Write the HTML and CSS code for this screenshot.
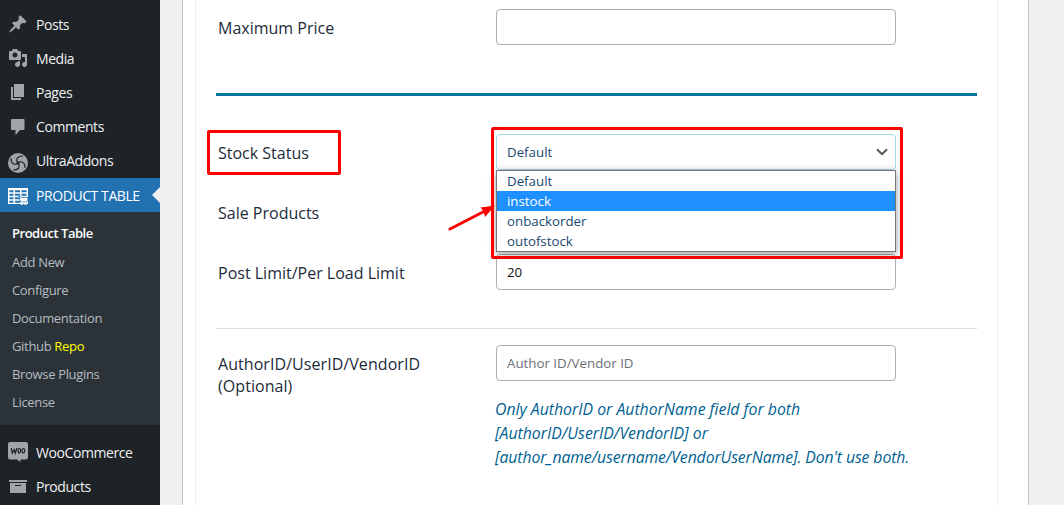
FILE: index.html
```html
<!DOCTYPE html>
<html lang="en">
<head>
  <meta charset="UTF-8">
  <meta name="viewport" content="width=device-width, initial-scale=1.0">
  <title>Product Table</title>
  <link rel="stylesheet" href="styles.css">
</head>
<body>
  <nav class="sidebar">
    <a class="menu-item" href="#">
      <svg class="icon" viewBox="0 0 20 20"><path d="M10.44 3.02l1.82-1.82 6.36 6.35-1.83 1.82c-1.05-.68-2.48-.57-3.41.36l-.75.75c-.92.93-1.04 2.35-.35 3.41l-1.83 1.82-2.41-2.41-2.8 2.79c-.42.42-3.38 2.71-3.8 2.29s1.86-3.39 2.28-3.81l2.79-2.79L4.1 9.36l1.83-1.82c1.05.69 2.48.57 3.4-.36l.75-.75c.93-.92 1.05-2.35.36-3.41z"/></svg>
      <span>Posts</span>
    </a>
    <a class="menu-item" href="#">
      <svg class="icon" viewBox="0 0 20 20"><path fill-rule="evenodd" d="M13 11V4c0-.55-.45-1-1-1h-1.670L9 1H5L3.670 3H2c-.55 0-1 .45-1 1v7c0 .55.45 1 1 1h10c.55 0 1-.45 1-1zM7 4.500c1.380 0 2.500 1.120 2.500 2.500S8.380 9.500 7 9.500 4.500 8.380 4.500 7 5.620 4.500 7 4.500zM14 6h5v10.500c0 1.380-1.120 2.500-2.500 2.500S14 17.880 14 16.500s1.120-2.500 2.500-2.500c.170 0 .340.020.500.050V9h-3V6zm-4 8.050V13h2v3.500c0 1.380-1.120 2.500-2.500 2.500S7 17.880 7 16.500 8.120 14 9.500 14c.170 0 .340.020.500.050z"/></svg>
      <span>Media</span>
    </a>
    <a class="menu-item" href="#">
      <svg class="icon" viewBox="0 0 20 20"><path d="M6 15V2h10v13H6zm-1 1h8v2H3V5h2v11z"/></svg>
      <span>Pages</span>
    </a>
    <a class="menu-item" href="#">
      <svg class="icon" viewBox="0 0 20 20"><path d="M4 2h11.500c.6 0 1 .4 1 1v9c0 .6-.4 1-1 1H12l-4.500 5v-5H4c-.6 0-1-.4-1-1V3c0-.6.4-1 1-1z"/></svg>
      <span>Comments</span>
    </a>
    <a class="menu-item" href="#">
      <svg class="icon icon-ultra" viewBox="0 0 20 20">
        <circle cx="10" cy="10" r="10"/>
        <g fill="none" stroke="#1d2327" stroke-width="1.100" stroke-linecap="round">
          <path d="M10 10C7.500 7 8.800 3 14.500 3"/>
          <path d="M10 10C13 7.500 17 8.800 17 14.500"/>
          <path d="M10 10C12.500 13 11.200 17 5.500 17"/>
          <path d="M10 10C7 12.500 3 11.200 3 5.500"/>
        </g>
        <path fill="#1d2327" d="M8.600 8l1.700.7 1.700-.2-.6 1.700.2 1.700-1.800-.7-1.700.3.600-1.700z"/>
      </svg>
      <span>UltraAddons</span>
    </a>
    <a class="menu-item current" href="#">
      <svg class="icon icon-table" viewBox="0 0 20 20">
        <path fill-rule="evenodd" d="M0 2h20v16H0zM1.500 4.300v2h4v-2zM7 4.300v2h5v-2zM13.500 4.300v2h5v-2zM1.500 7.800v2h4v-2zM7 7.800v2h5v-2zM13.500 7.800v2h5v-2zM1.500 11.300v2h4v-2zM7 11.300v2h5v-2zM1.500 14.800v2h4v-2zM7 14.800v2h5v-2z"/>
        <path stroke="#2271b1" stroke-width=".7" d="M10.500 10.300h2l.5 1.200h7l-1 4.500h-6.500l-1-4.500h-1z"/>
        <circle cx="13.800" cy="17.800" r="1.300"/>
        <circle cx="17.600" cy="17.800" r="1.300"/>
      </svg>
      <span>PRODUCT TABLE</span>
    </a>
    <ul class="submenu">
      <li class="active"><a href="#">Product Table</a></li>
      <li><a href="#">Add New</a></li>
      <li><a href="#">Configure</a></li>
      <li><a href="#">Documentation</a></li>
      <li><a href="#">Github <span class="repo">Repo</span></a></li>
      <li><a href="#">Browse Plugins</a></li>
      <li><a href="#">License</a></li>
    </ul>
    <a class="menu-item after-sub" href="#">
      <svg class="icon icon-woo" viewBox="0 0 20 20">
        <path d="M2 0h16a2 2 0 0 1 2 2v13.500a2 2 0 0 1-2 2h-5.500V20L9 17.500H2a2 2 0 0 1-2-2V2a2 2 0 0 1 2-2z"/>
        <g fill="none" stroke="#1d2327" stroke-width="1.200">
          <path d="M3.300 6l1 5.200 1.800-3.600 1.200 3.600L8.800 6"/>
          <ellipse cx="11.300" cy="8.700" rx="1.300" ry="2.200"/>
          <ellipse cx="15.400" cy="8.700" rx="1.300" ry="2.200"/>
        </g>
      </svg>
      <span>WooCommerce</span>
    </a>
    <a class="menu-item" href="#">
      <svg class="icon" viewBox="0 0 20 20"><path fill-rule="evenodd" d="M19 4v2H1V4h18zM2 7h16v10H2V7zm11 3V9H7v1h6z"/></svg>
      <span>Products</span>
    </a>
  </nav>

  <main class="content">
    <div class="panel">
      <form class="panel-inner">
        <section class="group group-price">
          <div class="field">
            <label>Maximum Price</label>
            <div class="input"></div>
          </div>
        </section>

        <section class="group group-stock">
          <div class="field">
            <label class="marked">Stock Status</label>
            <div class="input select focused">
              <span>Default</span>
              <svg class="chevron" viewBox="0 0 12 8"><path d="M1 1.200l5 5 5-5"/></svg>
              <ul class="dropdown">
                <li>Default</li>
                <li class="selected">instock</li>
                <li>onbackorder</li>
                <li>outofstock</li>
              </ul>
              <svg class="arrow" viewBox="0 0 48 28">
                <path class="arrow-line" d="M2 25L36 7.500"/>
                <path class="arrow-head" d="M47 1.500L32.500 3.500l3 3.500 1.500 6z"/>
              </svg>
            </div>
          </div>
          <div class="field">
            <label>Sale Products</label>
            <div class="input select"></div>
          </div>
          <div class="field">
            <label>Post Limit/Per Load Limit</label>
            <div class="input">20</div>
          </div>
        </section>

        <section class="group group-author">
          <div class="field">
            <label class="author">AuthorID/UserID/VendorID<br>(Optional)</label>
            <div class="field-body">
              <div class="input placeholder">Author ID/Vendor ID</div>
              <p class="help">
                Only AuthorID or AuthorName field for both<br>
                [AuthorID/UserID/VendorID] or<br>
                <span class="tight">[author_name/username/VendorUserName]. Don't use both.</span>
              </p>
            </div>
          </div>
        </section>
      </form>
    </div>
  </main>
</body>
</html>
```

FILE: styles.css
```css
*,
*::before,
*::after {
  box-sizing: border-box;
}

body {
  margin: 0;
  height: 505px;
  display: flex;
  overflow: hidden;
  background-color: #f0f0f0;
  font-family: "Open Sans", "Noto Sans", sans-serif;
  font-size: 13.3px;
}

a {
  color: inherit;
  text-decoration: none;
}

ul {
  list-style: none;
  margin: 0;
  padding: 0;
}

/* Sidebar */
.sidebar {
  width: 160px;
  height: 505px;
  flex: none;
  padding-top: 7px;
  background-color: #1d2327;
  color: #f0f0f1;
  font-size: 14px;
  letter-spacing: -0.42px;
}

.menu-item {
  display: flex;
  align-items: center;
  gap: 8px;
  height: 34.2px;
  padding-left: 8px;
  position: relative;
  white-space: nowrap;
}

.icon {
  width: 20px;
  height: 20px;
  flex: none;
  fill: #a0a5aa;
}

.icon-ultra {
  margin-top: 4px;
}

.icon-table {
  margin-top: 2px;
}

.menu-item.current {
  background-color: #2271b1;
  color: #fff;
}

.menu-item.current .icon {
  fill: #fff;
}

.menu-item.current::after {
  content: "";
  position: absolute;
  right: 0;
  top: 9px;
  border: 8px solid transparent;
  border-left: 0;
  border-right-color: #f0f0f0;
}

.submenu {
  height: 213px;
  padding-top: 7px;
  background-color: #2c3338;
  color: #b5bcc2;
  font-size: 13px;
  letter-spacing: -0.33px;
}

.submenu li {
  height: 28px;
  line-height: 28px;
  padding-left: 12px;
}

.submenu .active {
  height: 29px;
  color: #fff;
  font-weight: 600;
  letter-spacing: -0.48px;
}

.submenu .repo {
  color: #ff0;
}

.after-sub {
  margin-top: 10px;
}

/* Settings panel */
.content {
  flex: 1;
  padding: 0 35px 0 22px;
}

.panel {
  height: 505px;
  padding: 0 30px 0 12px;
  background-color: #fff;
  border: solid #c3c4c7;
  border-width: 0 1px;
}

.panel-inner {
  height: 505px;
  padding: 0 20px;
  border: solid #f0f0f0;
  border-width: 0 1px;
}

.group-price {
  height: 96px;
  padding-top: 9px;
  border-bottom: 3px solid #007599;
}

.group-stock {
  display: flex;
  flex-direction: column;
  gap: 24px;
  height: 233px;
  padding-top: 38px;
  border-bottom: 1px solid #dcdcde;
}

.group-author {
  padding-top: 16px;
}

.field {
  display: flex;
}

.field label {
  width: 280px;
  flex: none;
  padding: 8px 0 0 2px;
  font-size: 16px;
  line-height: 22px;
  color: #1d2b3a;
  position: relative;
}

.field .author {
  letter-spacing: 0.06px;
}

.marked::before {
  content: "";
  position: absolute;
  left: -9px;
  top: -4px;
  width: 134px;
  height: 45px;
  border: 3px solid #f00;
  border-radius: 2px;
}

.input {
  width: 400px;
  height: 36px;
  padding: 0 10px;
  display: flex;
  align-items: center;
  position: relative;
  background-color: #fff;
  border: 1px solid #b0b0b0;
  border-radius: 4px;
  color: #111;
}

.select {
  justify-content: space-between;
  color: #184a70;
}

.focused {
  border-color: #a3d7ea;
  z-index: 2;
}

/* red frame round the open select */
.focused::after {
  content: "";
  position: absolute;
  left: -6px;
  top: -8px;
  width: 412px;
  height: 132px;
  border: 3px solid #f00;
  border-radius: 2px;
  z-index: 2;
}

.chevron {
  width: 12px;
  height: 8px;
  margin-right: -3px;
  fill: none;
  stroke: #50575e;
  stroke-width: 2;
}

.dropdown {
  position: absolute;
  left: -1px;
  top: 35px;
  width: 400px;
  background-color: #fff;
  border: 1px solid #767676;
  box-shadow: 0 2px 8px rgba(0, 0, 0, 0.4);
}

.dropdown li {
  height: 20px;
  line-height: 20px;
  padding-left: 10px;
}

.dropdown .selected {
  background-color: #1e90ff;
  color: #fff;
}

.arrow {
  position: absolute;
  left: -49px;
  top: 69px;
  width: 48px;
  height: 28px;
  z-index: 3;
}

.arrow-line {
  stroke: #f00;
  stroke-width: 3;
  stroke-linecap: round;
}

.arrow-head {
  fill: #f00;
}

.placeholder {
  color: #6b6f75;
}

.help {
  margin: 16px 0 0 -1px;
  font-size: 15.8px;
  line-height: 24px;
  font-style: italic;
  color: #005f91;
  white-space: nowrap;
}

.tight {
  letter-spacing: -0.11px;
}
```
